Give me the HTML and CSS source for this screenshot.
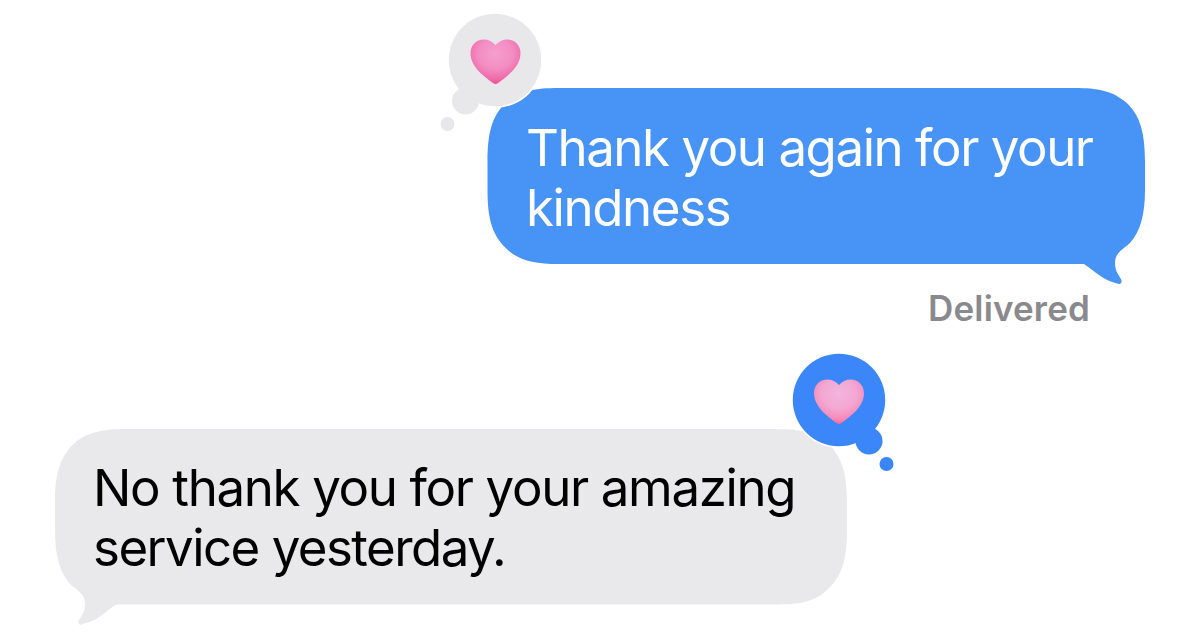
FILE: index.html
```
<!doctype html>
<html lang="en">
  <head>
    <meta charset="UTF-8" />
    <meta name="viewport" content="width=device-width, initial-scale=1.0" />
    <title>Messages</title>
    <link rel="stylesheet" href="styles.css">
  </head>
  <body>
    <main class="chat">
      <div class="message sent">
        <svg class="bubble-shape" viewBox="0 0 658 196" aria-hidden="true">
          <path d="M72 0 H588 C611 0 624 3 636 12 C652 24 658 42 658 74 V102 C658 127 653 144 643 155 C637 161 628 164 628 175 C628 184 632 187 634.500 192 C635 195 633 197 630 195.500 C614 191 609 184 597 176 H72 C48 176 34 173 22 163 C6 149 0.500 133 0.500 102 V74 C0.500 42 6 25 22 12 C34 3 48 0 72 0 Z" />
        </svg>
        <p>Thank you again for your<br><span class="second">kindness</span></p>
        <svg class="tapback" viewBox="-56 -50 112 122" role="img" aria-label="Heart">
          <defs>
            <radialGradient id="heart-pink" cx="50%" cy="32%" r="68%">
              <stop offset="0" stop-color="#f59fce" />
              <stop offset="0.5" stop-color="#f38dc2" />
              <stop offset="0.85" stop-color="#ef69a8" />
              <stop offset="1" stop-color="#ec4f92" />
            </radialGradient>
          </defs>
          <circle class="halo" r="48" />
          <circle r="46.200" />
          <circle cx="-29.500" cy="41" r="13.500" />
          <circle cx="-47.500" cy="64" r="7" />
          <path fill="url(#heart-pink)" d="M0.500 -15 C3.500 -18.500 7.500 -20.500 12 -20.500 C20 -20.500 25.500 -14.500 25.500 -7 C25.500 6 14 15 3 23 Q0.500 25 -2 23 C-13 15 -24.500 6 -24.500 -7 C-24.500 -14.500 -19 -20.500 -11 -20.500 C-6.500 -20.500 -2.500 -18.500 0.500 -15 Z" />
        </svg>
      </div>

      <div class="status">Delivered</div>

      <div class="message received">
        <svg class="bubble-shape" viewBox="0 0 792 196" aria-hidden="true">
          <path d="M72 0 H720 C744 0 758 3 770 12 C786 25 792 42 792 74 V102 C792 133 786 149 770 163 C758 173 744 175.500 720 175.500 H61 C49 183.500 44 191 28 195 C25 197 23 195 23.500 192 C26 187 30 184 30 175 C30 164 21 161 15 155 C5 144 0 127 0 102 V74 C0 42 6 25 22 12 C34 3 48 0 72 0 Z" />
        </svg>
        <p>No thank you for your amazing<br><span class="second">service yesterday.</span></p>
        <svg class="tapback" viewBox="-56 -50 112 122" role="img" aria-label="Heart">
          <defs>
            <radialGradient id="heart-light" cx="50%" cy="32%" r="68%">
              <stop offset="0" stop-color="#f3b4dd" />
              <stop offset="0.5" stop-color="#f3a8d3" />
              <stop offset="0.85" stop-color="#f788b7" />
              <stop offset="1" stop-color="#fa649b" />
            </radialGradient>
          </defs>
          <circle class="halo" r="48" />
          <circle r="46.200" />
          <circle cx="30" cy="41" r="13.500" />
          <circle cx="47.500" cy="64" r="7" />
          <path fill="url(#heart-light)" d="M0 -15 C3 -18.500 7 -20.500 11.500 -20.500 C19.500 -20.500 25 -14.500 25 -7 C25 6 13.500 15 2.500 23 Q0 25 -2.500 23 C-13.500 15 -25 6 -25 -7 C-25 -14.500 -19.500 -20.500 -11.500 -20.500 C-7 -20.500 -3 -18.500 0 -15 Z" />
        </svg>
      </div>
    </main>
  </body>
</html>
```

FILE: styles.css
```
body {
  margin: 0;
  background: #fff;
  font-family: Inter, 'Liberation Sans', sans-serif;
}

.chat {
  box-sizing: border-box;
  height: 642px;
  padding: 88px 55px 0;
  display: flex;
  flex-direction: column;
  overflow: hidden;
}

.message {
  position: relative;
  box-sizing: border-box;
  height: 176px;
  padding: 30px 39px;
  font-size: 51px;
  line-height: 60px;
  letter-spacing: -1.45px;
  white-space: nowrap;
}

.message p {
  position: relative;
  margin: 0;
}

.bubble-shape {
  position: absolute;
  top: 0;
  left: 0;
  width: 100%;
  height: 196px;
}

.sent {
  align-self: flex-end;
  width: 658px;
  color: #fff;
}

.sent .bubble-shape {
  fill: #4893f6;
}

.sent .second {
  letter-spacing: -1.4px;
}

.received {
  align-self: flex-start;
  width: 792px;
  margin-top: 100px;
  padding-top: 29px;
  padding-left: 38px;
  letter-spacing: -1.35px;
  color: #000;
}

.received .bubble-shape {
  fill: #e9e9eb;
}

.received .second {
  letter-spacing: -1.53px;
}

.tapback {
  position: absolute;
  width: 112px;
  height: 122px;
}

.sent .tapback {
  top: -78px;
  left: -48px;
  fill: #e8e8ea;
}

.received .tapback {
  top: -79px;
  right: -48px;
  fill: #3b87f9;
}

.tapback .halo {
  fill: #fff;
}

.status {
  align-self: flex-end;
  height: 65px;
  margin-right: 55px;
  padding-top: 23px;
  box-sizing: border-box;
  color: #8a898e;
  font-size: 35px;
  font-weight: 600;
  line-height: 42px;
  letter-spacing: 0.15px;
}
```
